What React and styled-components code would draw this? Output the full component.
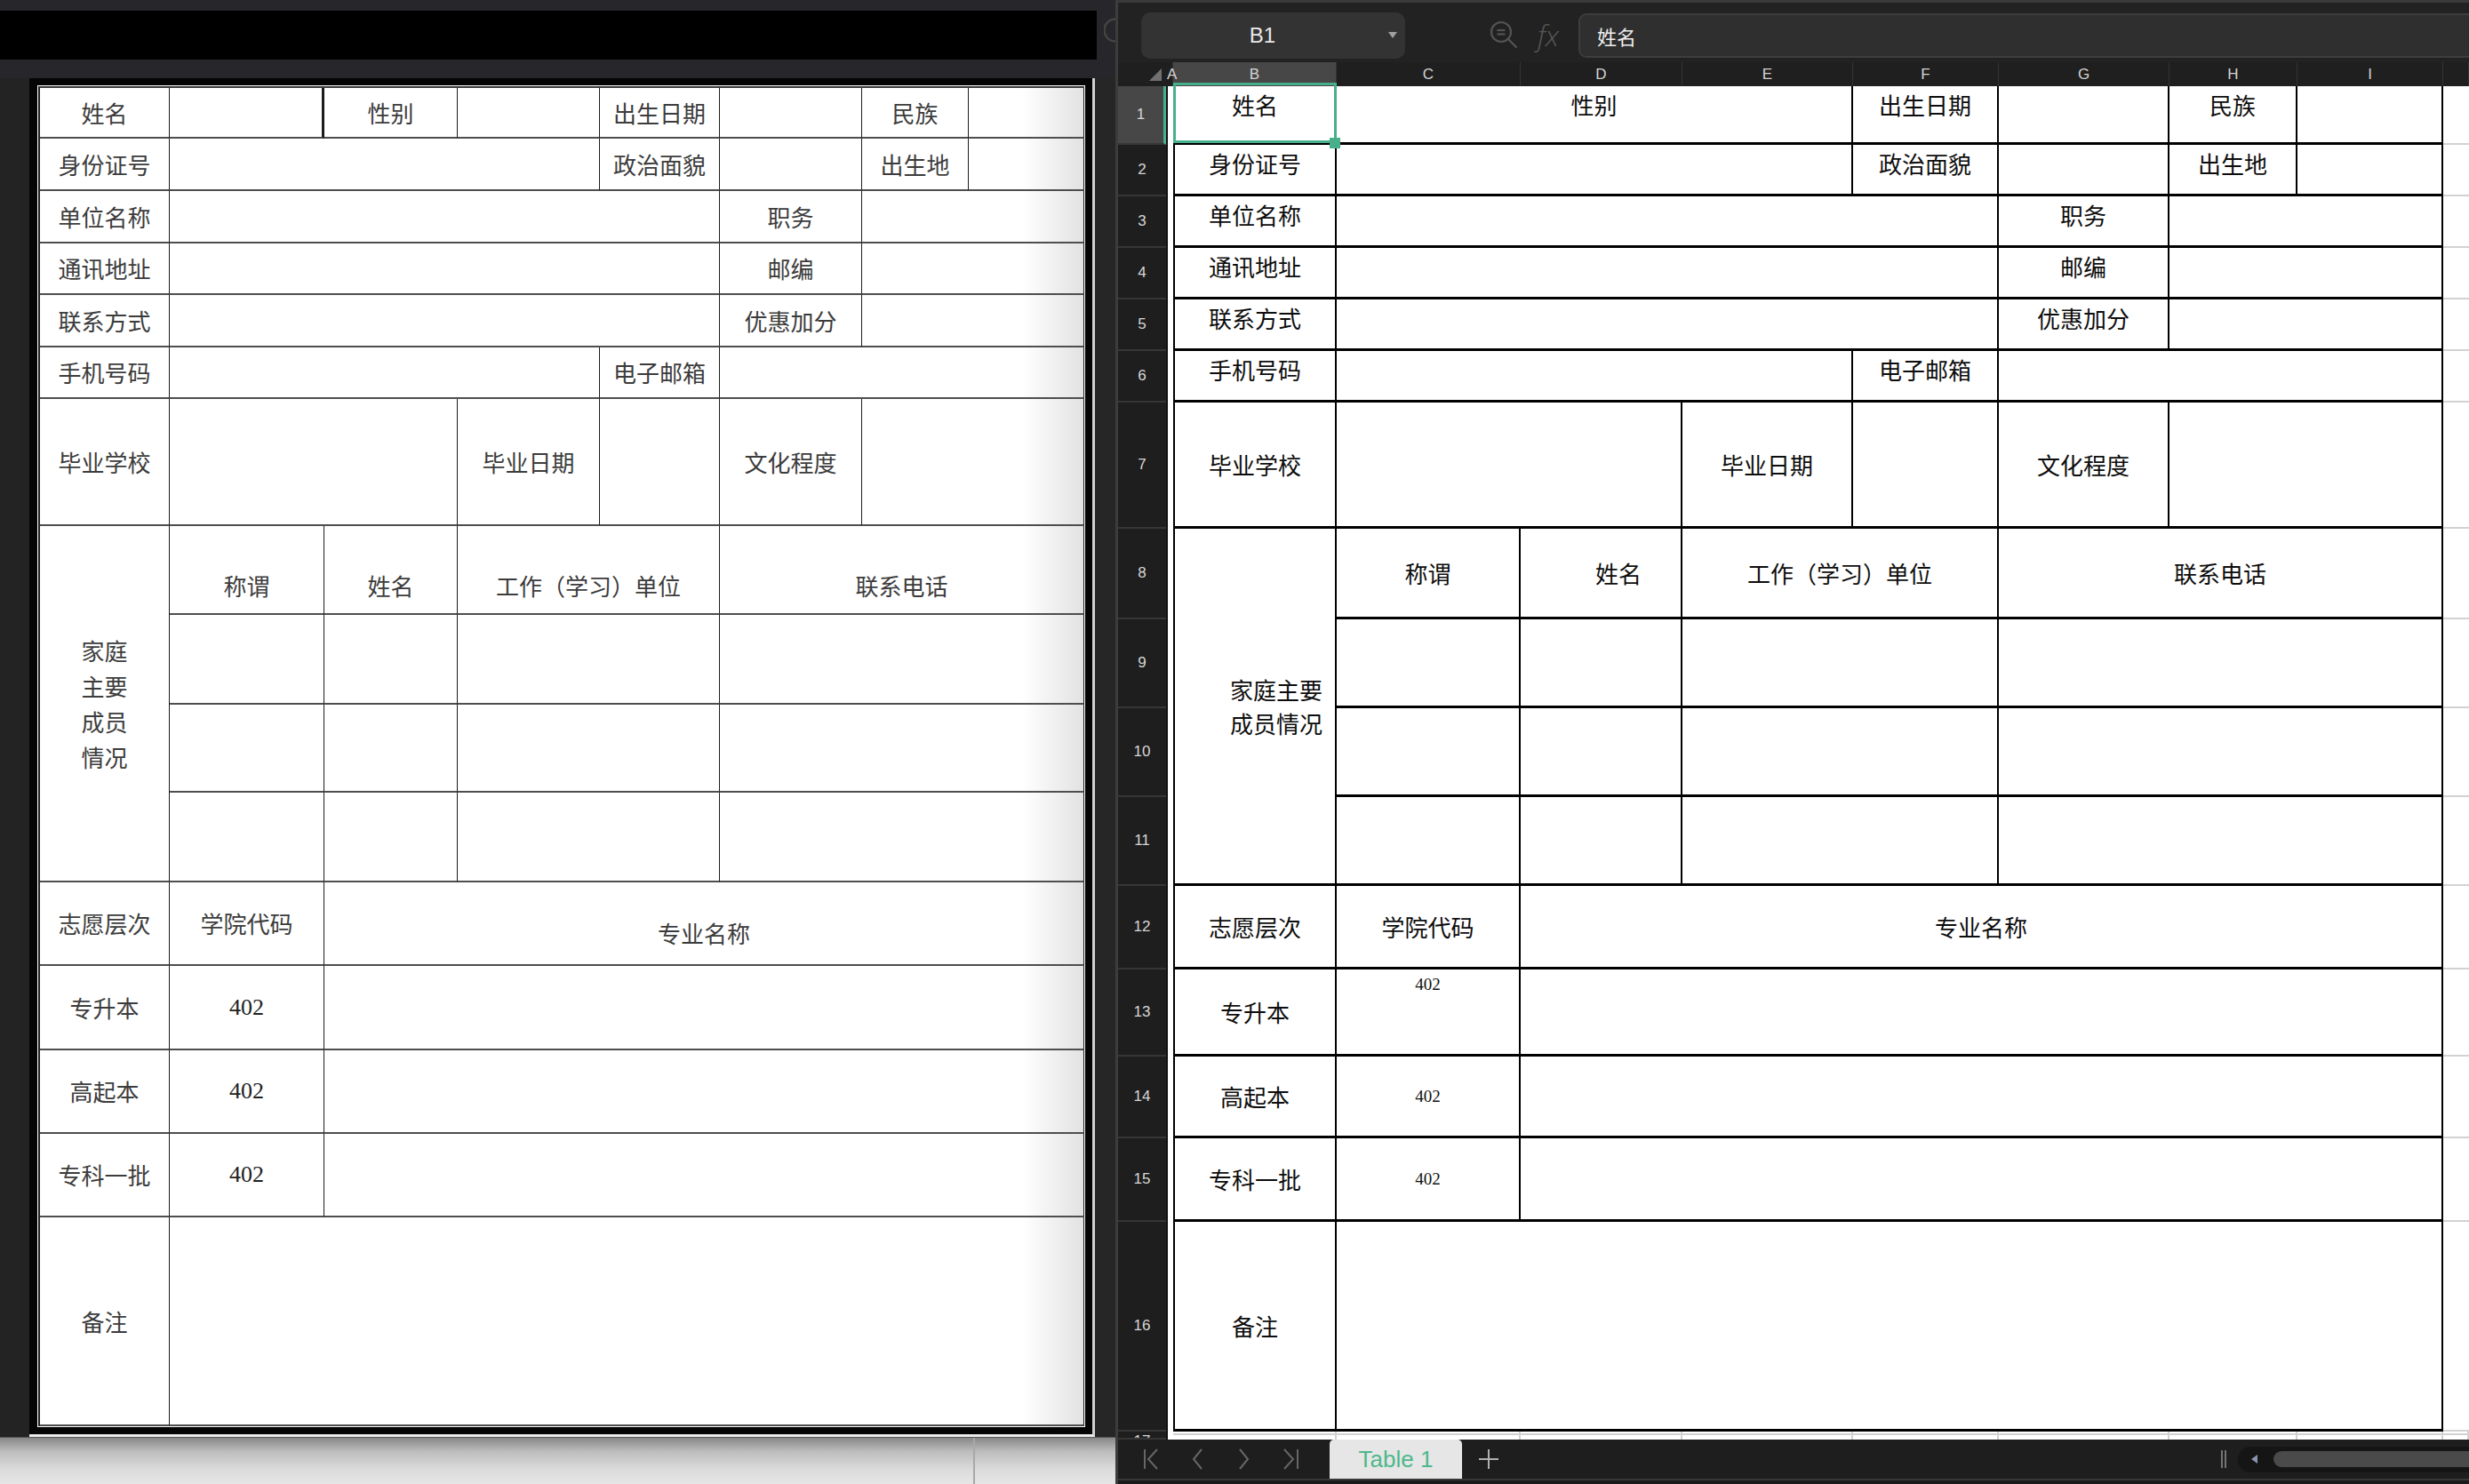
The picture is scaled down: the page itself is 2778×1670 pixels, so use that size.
import React from "react";
import styled, { createGlobalStyle } from "styled-components";

const GlobalStyle = createGlobalStyle`
  html, body { margin: 0; padding: 0; background: #1e1e1e; }
  body {
    width: 2778px; height: 1670px; overflow: hidden;
    font-family: "Noto Sans CJK SC", "Noto Sans", sans-serif;
  }
  * { box-sizing: border-box; }
`;

const CJK = `"Noto Sans CJK SC", "Noto Sans", sans-serif`;

const Screen = styled.div`
  display: flex;
  width: 2778px;
  height: 1670px;
  overflow: hidden;
`;

/* ---------------- LEFT: document viewer ---------------- */

const LeftPanel = styled.div`
  flex: 0 0 1255px;
  width: 1255px;
  height: 1670px;
  display: flex;
  flex-direction: column;
  background: #27262b;
`;

const TitleArea = styled.div`
  flex: 0 0 88px;
  height: 88px;
  padding-top: 12px;
  display: flex;
  align-items: flex-start;
`;

const BlackBar = styled.div`
  width: 1234px;
  height: 55px;
  background: #000;
`;

const ArcIcon = styled.svg`
  margin-left: 8px;
  margin-top: 8px;
  flex: 0 0 auto;
`;

const Middle = styled.div`
  flex: 0 0 1529px;
  display: flex;
`;

const Gutter = styled.div`
  flex: 0 0 ${(p) => p.$w}px;
  width: ${(p) => p.$w}px;
  background: ${(p) => p.$bg};
`;

const PageFrame = styled.div`
  flex: 0 0 1199px;
  width: 1199px;
  background: #050505;
  padding: 8px 8px 8px 9px;
  border-right: 3px solid #d0d0d0;
  border-bottom: 3px solid #ececec;
`;

const Paper = styled.div`
  background: #fff;
  padding: 1px;
`;

const DocGrid = styled.div`
  display: grid;
  grid-template-columns: 146px 174px 150px 160px 135px 160px 120px 130px;
  grid-template-rows: 57px 59px 59px 58px 59px 58px 143px 100px 101px 99px 101px 94px 95px 94px 94px 235px;
  border-top: 2px solid #3a3a3a;
  border-left: 2px solid #222;
  background: linear-gradient(to right, #fff calc(100% - 70px), #e2e2e2);
`;

const DocCell = styled.div`
  grid-column: ${(p) => p.$c} / span ${(p) => p.$cs || 1};
  grid-row: ${(p) => p.$r} / span ${(p) => p.$rs || 1};
  display: flex;
  align-items: center;
  justify-content: center;
  text-align: center;
  white-space: pre-line;
  padding-top: ${(p) => p.$pt || 0}px;
  border-right: ${(p) => p.$br || 1.5}px solid #1c1c1c;
  border-bottom: 2px solid #4e4e4e;
  font-family: ${CJK};
  font-size: 26px;
  line-height: 40px;
  color: #3c3c3c;
`;

const DocNumber = styled.span`
  font-family: "Liberation Serif", serif;
  font-size: 26px;
  color: #222;
`;

const BottomShade = styled.div`
  flex: 1;
  display: flex;
  background: linear-gradient(#888, #bdbdbd 30%, #dcdcdc 70%, #e6e6e6);
  border-top: 1px solid #555;
`;

const ShadePart = styled.div`
  flex: 0 0 1097px;
  border-right: 2px solid #a8a8a8;
`;

/* ---------------- RIGHT: spreadsheet ---------------- */

const COLS = "54px 8px 184px 207px 182px 192px 164px 192px 144px 164px 1fr";

const RightPanel = styled.div`
  flex: 1;
  height: 1670px;
  display: flex;
  flex-direction: column;
  background: #212121;
  border-left: 3px solid #3c3c3c;
  overflow: hidden;
`;

const Toolbar = styled.div`
  flex: 0 0 70px;
  height: 70px;
  border-top: 3px solid #3a3a3a;
  background: #222;
  display: flex;
  align-items: center;
  padding-top: 7px;
  padding-left: 26px;
  overflow: hidden;
`;

const NameBox = styled.div`
  flex: 0 0 297px;
  width: 297px;
  height: 52px;
  border-radius: 10px;
  background: #333;
  display: flex;
  align-items: center;
`;

const NameLabel = styled.div`
  flex: 1;
  text-align: center;
  font-family: "Liberation Sans", sans-serif;
  font-size: 24px;
  color: #e8e8e8;
`;

const Caret = styled.svg`
  flex: 0 0 24px;
`;

const Magnifier = styled.svg`
  margin-left: 95px;
  flex: 0 0 auto;
`;

const Fx = styled.div`
  margin-left: 20px;
  font-family: "Open Sans", "DejaVu Sans", sans-serif;
  font-style: italic;
  font-weight: 300;
  font-size: 32px;
  color: #575757;
  line-height: 1;
`;

const FormulaBox = styled.div`
  margin-left: 22px;
  flex: 1;
  height: 50px;
  margin-right: -30px;
  border: 2px solid #3d3d3d;
  border-radius: 9px;
  background: #2f2f2f;
  display: flex;
  align-items: center;
  padding-left: 19px;
  font-family: ${CJK};
  font-size: 22px;
  color: #eee;
`;

const ColHeader = styled.div`
  flex: 0 0 27px;
  height: 27px;
  display: grid;
  grid-template-columns: ${COLS};
  background: #1f1f1f;
`;

const ColHead = styled.div`
  display: flex;
  align-items: center;
  justify-content: ${(p) => (p.$start ? "flex-start" : "center")};
  font-family: "Liberation Sans", sans-serif;
  font-size: 17px;
  color: #d4d4d4;
  border-right: 1px solid #333;
  background: ${(p) => (p.$active ? "#474747" : "transparent")};
  position: relative;
  z-index: ${(p) => (p.$start ? 1 : 0)};
  padding-left: ${(p) => (p.$start ? 1 : 0)}px;
  white-space: nowrap;
`;

const Corner = styled.div`
  display: flex;
  align-items: flex-end;
  justify-content: flex-end;
  padding: 0 5px 6px 0;
`;

const SheetGrid = styled.div`
  flex: 0 0 1523px;
  display: grid;
  grid-template-columns: ${COLS};
  grid-template-rows: 66px 58px 58px 58px 58px 58px 142px 102px 100px 100px 100px 94px 98px 92px 94px 236px 9px;
  background: #fff;
`;

const RowHead = styled.div`
  grid-column: 1;
  grid-row: ${(p) => p.$r};
  display: flex;
  align-items: ${(p) => (p.$clip ? "flex-start" : "center")};
  justify-content: center;
  padding-top: ${(p) => (p.$clip ? 1 : 0)}px;
  background: ${(p) => (p.$active ? "#474747" : "#1e1e1e")};
  border-bottom: 2px solid #363636;
  border-right: ${(p) => (p.$active ? "3px solid #47b08a" : "none")};
  font-family: "Liberation Sans", sans-serif;
  font-size: 17px;
  line-height: 20px;
  color: #d6d6d6;
  overflow: hidden;
`;

const ACell = styled.div`
  grid-column: 2;
  grid-row: ${(p) => p.$r};
  background: #fff;
  border-left: 2px solid #111;
`;

const JCell = styled.div`
  grid-column: 11;
  grid-row: ${(p) => p.$r};
  background: #fff;
  border-bottom: 2px solid #d2d2d2;
`;

const Cell = styled.div`
  grid-column: ${(p) => p.$c} / span ${(p) => p.$cs || 1};
  grid-row: ${(p) => p.$r} / span ${(p) => p.$rs || 1};
  position: relative;
  display: flex;
  align-items: ${(p) => (p.$top ? "flex-start" : "center")};
  justify-content: ${(p) => (p.$end ? "flex-end" : "center")};
  text-align: ${(p) => (p.$end ? "left" : "center")};
  white-space: pre-line;
  padding-top: ${(p) => (p.$top ? 3 : 0)}px;
  padding-left: ${(p) => p.$pl || 0}px;
  padding-right: ${(p) => p.$pr || 0}px;
  border-left: ${(p) => (p.$c === 3 ? "2px solid #000" : "none")};
  border-right: 2px solid #000;
  border-bottom: 3px solid #000;
  font-family: ${CJK};
  font-size: 26px;
  line-height: ${(p) => (p.$lh ? p.$lh : 36)}px;
  color: #0d0d0d;
`;

const SheetNumber = styled.span`
  font-family: "Liberation Serif", serif;
  font-size: 19px;
  line-height: 28px;
  color: #111;
`;

const Selection = styled.div`
  position: absolute;
  left: -2px;
  top: -4px;
  right: -2px;
  bottom: -1px;
  border: 3px solid #47b08a;
  pointer-events: none;
  z-index: 2;
`;

const FillHandle = styled.div`
  position: absolute;
  right: -7px;
  bottom: -9px;
  width: 12px;
  height: 12px;
  background: #47b08a;
`;

const GhostCell = styled.div`
  grid-column: ${(p) => p.$c};
  grid-row: 17;
  background: #fff;
  border-right: 2px solid #d2d2d2;
  box-shadow: inset 0 2px 0 #fff, inset 0 4px 0 #d2d2d2;
`;

const TabBar = styled.div`
  flex: 0 0 44px;
  height: 44px;
  background: #1e1e1e;
  display: flex;
  align-items: stretch;
  padding-left: 28px;
`;

const NavGroup = styled.div`
  display: flex;
  align-items: center;
  gap: 32px;
`;

const Tab = styled.div`
  margin-left: 34px;
  flex: 0 0 149px;
  background: #e6e6e6;
  border-radius: 5px 5px 0 0;
  display: flex;
  align-items: center;
  justify-content: center;
  font-family: "Liberation Sans", sans-serif;
  font-size: 26px;
  color: #4db88c;
`;

const AddButton = styled.svg`
  margin-left: 19px;
  align-self: center;
`;

const RightTools = styled.div`
  margin-left: auto;
  display: flex;
  align-items: center;
`;

const Track = styled.div`
  margin-left: 13px;
  width: 260px;
  height: 29px;
  border-radius: 15px 0 0 15px;
  background: #151515;
  display: flex;
  align-items: center;
  padding-left: 15px;
`;

const Thumb = styled.div`
  margin-left: 18px;
  flex: 1;
  height: 18px;
  border-radius: 9px 0 0 9px;
  background: #4a4a4a;
`;

const BottomStrip = styled.div`
  flex: 0 0 6px;
  border-top: 2px solid #383838;
  background: #1b1b1b;
`;

/* ---------------- data ---------------- */

const docCells = [
  { r: 1, c: 1, t: "姓名" }, { r: 1, c: 2, br: 3 }, { r: 1, c: 3, t: "性别" }, { r: 1, c: 4 },
  { r: 1, c: 5, t: "出生日期" }, { r: 1, c: 6 }, { r: 1, c: 7, t: "民族" }, { r: 1, c: 8 },
  { r: 2, c: 1, t: "身份证号" }, { r: 2, c: 2, cs: 3 }, { r: 2, c: 5, t: "政治面貌" }, { r: 2, c: 6 },
  { r: 2, c: 7, t: "出生地" }, { r: 2, c: 8 },
  { r: 3, c: 1, t: "单位名称" }, { r: 3, c: 2, cs: 4 }, { r: 3, c: 6, t: "职务" }, { r: 3, c: 7, cs: 2 },
  { r: 4, c: 1, t: "通讯地址" }, { r: 4, c: 2, cs: 4 }, { r: 4, c: 6, t: "邮编" }, { r: 4, c: 7, cs: 2 },
  { r: 5, c: 1, t: "联系方式" }, { r: 5, c: 2, cs: 4 }, { r: 5, c: 6, t: "优惠加分" }, { r: 5, c: 7, cs: 2 },
  { r: 6, c: 1, t: "手机号码" }, { r: 6, c: 2, cs: 3 }, { r: 6, c: 5, t: "电子邮箱" }, { r: 6, c: 6, cs: 3 },
  { r: 7, c: 1, t: "毕业学校" }, { r: 7, c: 2, cs: 2 }, { r: 7, c: 4, t: "毕业日期" }, { r: 7, c: 5 },
  { r: 7, c: 6, t: "文化程度" }, { r: 7, c: 7, cs: 2 },
  { r: 8, c: 1, rs: 4, t: "家庭\n主要\n成员\n情况" },
  { r: 8, c: 2, t: "称谓", pt: 36 }, { r: 8, c: 3, t: "姓名", pt: 36 },
  { r: 8, c: 4, cs: 2, t: "工作（学习）单位", pt: 36 }, { r: 8, c: 6, cs: 3, t: "联系电话", pt: 36 },
  ...[9, 10, 11].flatMap((r) => [
    { r, c: 2 }, { r, c: 3 }, { r, c: 4, cs: 2 }, { r, c: 6, cs: 3 },
  ]),
  { r: 12, c: 1, t: "志愿层次" }, { r: 12, c: 2, t: "学院代码" }, { r: 12, c: 3, cs: 6, t: "专业名称", pt: 22 },
  { r: 13, c: 1, t: "专升本" }, { r: 13, c: 2, num: "402" }, { r: 13, c: 3, cs: 6 },
  { r: 14, c: 1, t: "高起本" }, { r: 14, c: 2, num: "402" }, { r: 14, c: 3, cs: 6 },
  { r: 15, c: 1, t: "专科一批" }, { r: 15, c: 2, num: "402" }, { r: 15, c: 3, cs: 6 },
  { r: 16, c: 1, t: "备注" }, { r: 16, c: 2, cs: 7 },
];

const sheetCells = [
  { r: 1, c: 3, t: "姓名", sel: true }, { r: 1, c: 4, cs: 3, t: "性别" }, { r: 1, c: 7, t: "出生日期" },
  { r: 1, c: 8 }, { r: 1, c: 9, t: "民族" }, { r: 1, c: 10 },
  { r: 2, c: 3, t: "身份证号" }, { r: 2, c: 4, cs: 3 }, { r: 2, c: 7, t: "政治面貌" }, { r: 2, c: 8 },
  { r: 2, c: 9, t: "出生地" }, { r: 2, c: 10 },
  { r: 3, c: 3, t: "单位名称" }, { r: 3, c: 4, cs: 4 }, { r: 3, c: 8, t: "职务" }, { r: 3, c: 9, cs: 2 },
  { r: 4, c: 3, t: "通讯地址" }, { r: 4, c: 4, cs: 4 }, { r: 4, c: 8, t: "邮编" }, { r: 4, c: 9, cs: 2 },
  { r: 5, c: 3, t: "联系方式" }, { r: 5, c: 4, cs: 4 }, { r: 5, c: 8, t: "优惠加分" }, { r: 5, c: 9, cs: 2 },
  { r: 6, c: 3, t: "手机号码" }, { r: 6, c: 4, cs: 3 }, { r: 6, c: 7, t: "电子邮箱" }, { r: 6, c: 8, cs: 3 },
  { r: 7, c: 3, t: "毕业学校" }, { r: 7, c: 4, cs: 2 }, { r: 7, c: 6, t: "毕业日期" }, { r: 7, c: 7 },
  { r: 7, c: 8, t: "文化程度" }, { r: 7, c: 9, cs: 2 },
  { r: 8, c: 3, rs: 4, t: "家庭主要\n成员情况", end: true, pr: 14, lh: 38 },
  { r: 8, c: 4, t: "称谓" }, { r: 8, c: 5, t: "姓名", pl: 40 },
  { r: 8, c: 6, cs: 2, t: "工作（学习）单位" }, { r: 8, c: 8, cs: 3, t: "联系电话" },
  ...[9, 10, 11].flatMap((r) => [
    { r, c: 4 }, { r, c: 5 }, { r, c: 6, cs: 2 }, { r, c: 8, cs: 3 },
  ]),
  { r: 12, c: 3, t: "志愿层次" }, { r: 12, c: 4, t: "学院代码" }, { r: 12, c: 5, cs: 6, t: "专业名称" },
  { r: 13, c: 3, t: "专升本" }, { r: 13, c: 4, num: "402", numTop: true }, { r: 13, c: 5, cs: 6 },
  { r: 14, c: 3, t: "高起本" }, { r: 14, c: 4, num: "402" }, { r: 14, c: 5, cs: 6 },
  { r: 15, c: 3, t: "专科一批" }, { r: 15, c: 4, num: "402" }, { r: 15, c: 5, cs: 6 },
  { r: 16, c: 3, t: "备注" }, { r: 16, c: 4, cs: 7 },
];

const letters = ["B", "C", "D", "E", "F", "G", "H", "I"];
const rows = Array.from({ length: 16 }, (_, i) => i + 1);

/* ---------------- icons ---------------- */

const NavFirst = () => (
  <svg width="20" height="26" viewBox="0 0 20 26" fill="none" stroke="#666" strokeWidth="2">
    <line x1="2" y1="2" x2="2" y2="24" />
    <polyline points="16,2 6,13 16,24" />
  </svg>
);
const NavPrev = () => (
  <svg width="20" height="26" viewBox="0 0 20 26" fill="none" stroke="#666" strokeWidth="2">
    <polyline points="14,2 5,13 14,24" />
  </svg>
);
const NavNext = () => (
  <svg width="20" height="26" viewBox="0 0 20 26" fill="none" stroke="#666" strokeWidth="2">
    <polyline points="5,2 14,13 5,24" />
  </svg>
);
const NavLast = () => (
  <svg width="20" height="26" viewBox="0 0 20 26" fill="none" stroke="#666" strokeWidth="2">
    <polyline points="3,2 13,13 3,24" />
    <line x1="18" y1="2" x2="18" y2="24" />
  </svg>
);

export default function App() {
  return (
    <>
      <GlobalStyle />
      <Screen>
        <LeftPanel>
          <TitleArea>
            <BlackBar />
            <ArcIcon width="13" height="28" viewBox="0 0 13 28">
              <path d="M13 1.5 A12.5 12.5 0 0 0 13 26.5" fill="none" stroke="#444" strokeWidth="2.5" />
            </ArcIcon>
          </TitleArea>
          <Middle>
            <Gutter $w={33} $bg="#232323" />
            <PageFrame>
              <Paper>
                <DocGrid>
                  {docCells.map((d, i) => (
                    <DocCell key={i} $r={d.r} $c={d.c} $cs={d.cs} $rs={d.rs} $br={d.br} $pt={d.pt}>
                      {d.num ? <DocNumber>{d.num}</DocNumber> : d.t || ""}
                    </DocCell>
                  ))}
                </DocGrid>
              </Paper>
            </PageFrame>
            <Gutter $w={23} $bg="#262626" />
          </Middle>
          <BottomShade>
            <ShadePart />
          </BottomShade>
        </LeftPanel>

        <RightPanel>
          <Toolbar>
            <NameBox>
              <NameLabel>B1</NameLabel>
              <Caret width="24" height="10" viewBox="0 0 24 10">
                <polygon points="5,1 15,1 10,8" fill="#a0a0a0" />
              </Caret>
            </NameBox>
            <Magnifier width="34" height="34" viewBox="0 0 34 34" fill="none" stroke="#545454" strokeWidth="2.2">
              <circle cx="13" cy="13" r="11" />
              <line x1="21" y1="21" x2="30" y2="30" strokeLinecap="round" />
              <line x1="8.5" y1="11" x2="17.5" y2="11" />
              <line x1="8.5" y1="15.5" x2="17.5" y2="15.5" />
            </Magnifier>
            <Fx>fx</Fx>
            <FormulaBox>姓名</FormulaBox>
          </Toolbar>

          <ColHeader>
            <Corner>
              <svg width="14" height="14" viewBox="0 0 14 14">
                <polygon points="14,0 14,14 0,14" fill="#707070" />
              </svg>
            </Corner>
            <ColHead $start>A</ColHead>
            {letters.map((l) => (
              <ColHead key={l} $active={l === "B"}>{l}</ColHead>
            ))}
            <ColHead />
          </ColHeader>

          <SheetGrid>
            {rows.map((r) => (
              <React.Fragment key={r}>
                <RowHead $r={r} $active={r === 1}>{r}</RowHead>
                <ACell $r={r} />
                <JCell $r={r} />
              </React.Fragment>
            ))}
            {sheetCells.map((d, i) => (
              <Cell
                key={i}
                $r={d.r}
                $c={d.c}
                $cs={d.cs}
                $rs={d.rs}
                $top={d.r <= 6 || d.numTop}
                $end={d.end}
                $pl={d.pl}
                $pr={d.pr}
                $lh={d.lh}
              >
                {d.num ? <SheetNumber>{d.num}</SheetNumber> : d.t || ""}
                {d.sel && (
                  <Selection>
                    <FillHandle />
                  </Selection>
                )}
              </Cell>
            ))}
            <RowHead $r={17} $clip>17</RowHead>
            <ACell $r={17} />
            {[3, 4, 5, 6, 7, 8, 9, 10, 11].map((c) => (
              <GhostCell key={c} $c={c} />
            ))}
          </SheetGrid>

          <TabBar>
            <NavGroup>
              <NavFirst />
              <NavPrev />
              <NavNext />
              <NavLast />
            </NavGroup>
            <Tab>Table 1</Tab>
            <AddButton width="22" height="22" viewBox="0 0 22 22" stroke="#b0b0b0" strokeWidth="2">
              <line x1="11" y1="0" x2="11" y2="22" />
              <line x1="0" y1="11" x2="22" y2="11" />
            </AddButton>
            <RightTools>
              <svg width="6" height="20" viewBox="0 0 6 20" stroke="#8a8a8a" strokeWidth="1.6">
                <line x1="1" y1="0" x2="1" y2="20" />
                <line x1="5" y1="0" x2="5" y2="20" />
              </svg>
              <Track>
                <svg width="7" height="10" viewBox="0 0 7 10">
                  <polygon points="7,0 7,10 0,5" fill="#8a94b0" />
                </svg>
                <Thumb />
              </Track>
            </RightTools>
          </TabBar>
          <BottomStrip />
        </RightPanel>
      </Screen>
    </>
  );
}
